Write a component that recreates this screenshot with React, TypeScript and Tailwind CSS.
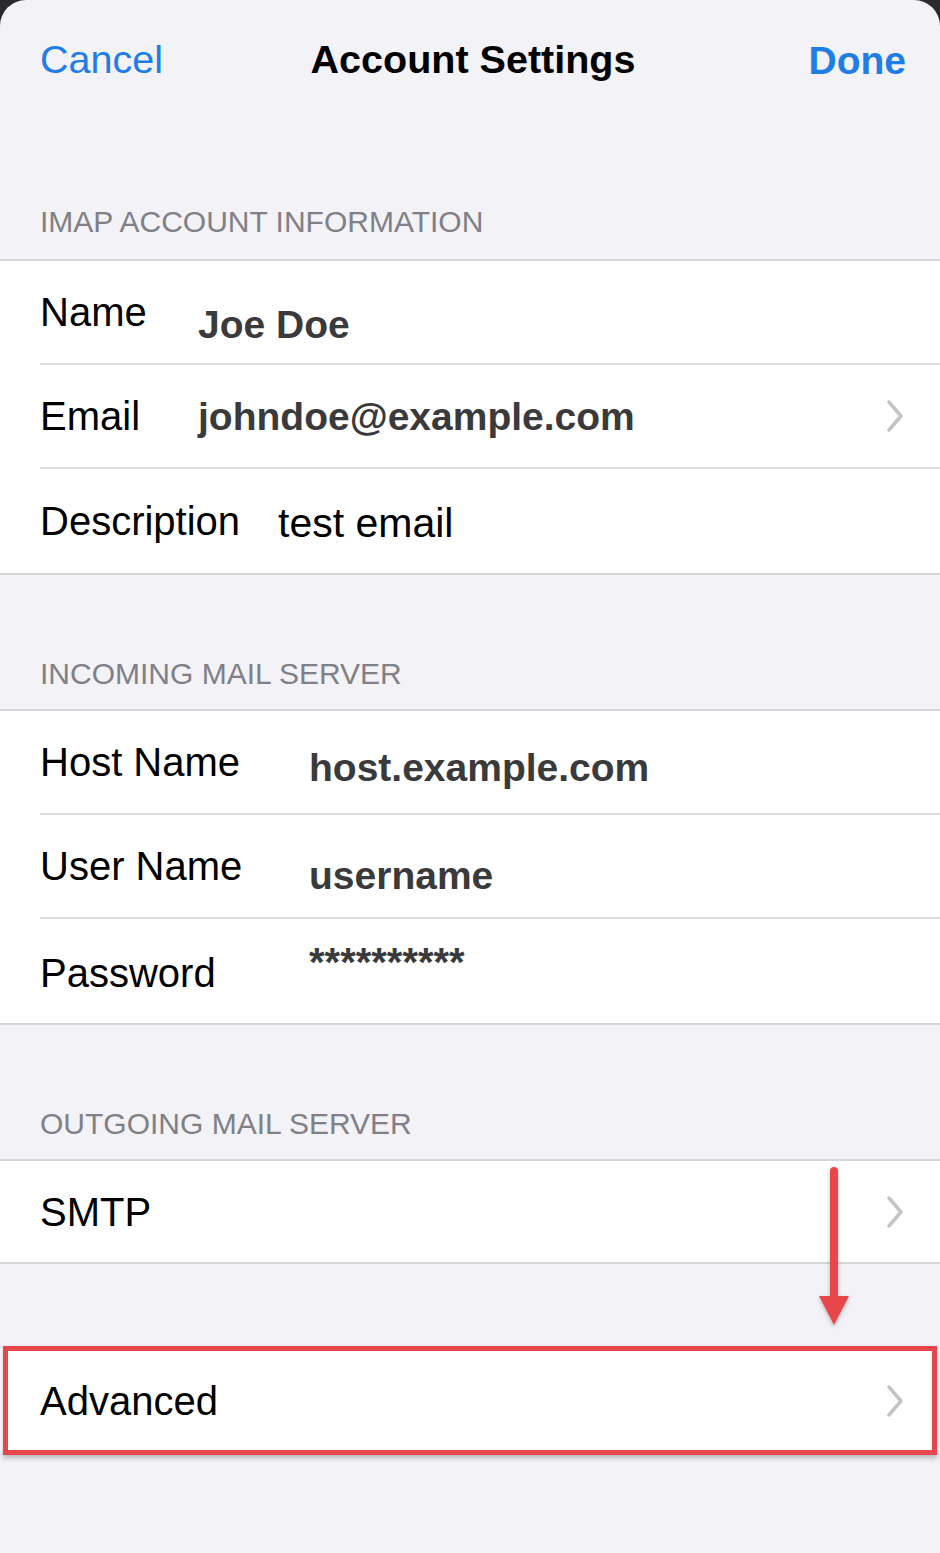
import type { ReactNode } from "react";

function Chevron() {
  return (
    <svg width="18" height="32" viewBox="0 0 18 32" className="ml-auto shrink-0">
      <polyline points="3,2 15,16 3,30" fill="none" stroke="#c4c4c8" strokeWidth="3.5" strokeLinecap="round" strokeLinejoin="round" />
    </svg>
  );
}

function Header({ title, h, pb }: { title: string; h: string; pb: string }) {
  return (
    <div className={`${h} ${pb} flex items-end px-10`}>
      <span className="text-[30px] leading-none text-[#808086]">{title}</span>
    </div>
  );
}

function Row({ label, labelW, labelCls = "", value, valueCls = "", chevron, last, h = "h-[104px]" }: {
  label: string; labelW: string; labelCls?: string; value?: ReactNode; valueCls?: string; chevron?: boolean; last?: boolean; h?: string;
}) {
  return (
    <div className="pl-10 bg-white">
      <div className={`${h} flex items-center pr-9 ${last ? "" : "border-b-2 border-[#dcdce0]"}`}>
        <span className={`${labelW} shrink-0 text-[40px] leading-none text-black ${labelCls}`}>{label}</span>
        {value && <span className={`leading-none ${valueCls}`}>{value}</span>}
        {chevron && <Chevron />}
      </div>
    </div>
  );
}

export default function App() {
  const bold = "text-[39px] font-bold text-[#3a3a3c]";
  return (
    <div className="bg-[#2a2a2c] font-['Liberation_Sans',Arial,sans-serif]">
      <div className="relative min-h-[1553px] bg-[#f2f2f7] rounded-t-[26px] overflow-hidden">
        {/* nav */}
        <div className="h-[120px] grid grid-cols-[1fr_auto_1fr] items-center pl-10 pr-[34px]">
          <span className="text-[39.5px] leading-none text-[#1f7de6]">Cancel</span>
          <span className="text-[39.5px] leading-none font-bold text-black">Account Settings</span>
          <span className="justify-self-end text-[39px] leading-none font-bold text-[#1f7de6]">Done</span>
        </div>

        <Header title="IMAP ACCOUNT INFORMATION" h="h-[139px]" pb="pb-[22px]" />
        <div className="border-y-2 border-[#d6d6da]">
          <Row label="Name" labelW="w-[158px]" value="Joe Doe" valueCls={`${bold} mt-[24px]`} />
          <Row label="Email" labelW="w-[158px]" value="johndoe@example.com" valueCls={bold} chevron />
          <Row label="Description" labelW="w-[238px]" value="test email" valueCls="text-[41px] text-black mt-[4px]" last />
        </div>

        <Header title="INCOMING MAIL SERVER" h="h-[134px]" pb="pb-[20px]" />
        <div className="border-y-2 border-[#d6d6da]">
          <Row label="Host Name" labelW="w-[269px]" value="host.example.com" valueCls={`${bold} mt-[10px]`} />
          <Row label="User Name" labelW="w-[269px]" value="username" valueCls={`${bold} mt-[18px]`} />
          <Row label="Password" labelW="w-[269px]" labelCls="mt-[4px]" value="**********" valueCls="text-[40px] font-bold text-[#3a3a3c] mb-[18px]" last />
        </div>

        <Header title="OUTGOING MAIL SERVER" h="h-[134px]" pb="pb-[20px]" />
        <div className="border-y-2 border-[#d6d6da]">
          <Row label="SMTP" labelW="w-auto" chevron last h="h-[101px]" />
        </div>

        <div className="h-[85px]" />
        <div className="relative">
          <Row label="Advanced" labelW="w-auto" chevron last h="h-[103px]" />
          <div className="absolute left-[3px] right-[3px] -top-[3px] -bottom-[3px] border-[5px] border-[#e8464b] shadow-[0_3px_5px_rgba(0,0,0,0.25)] pointer-events-none" />
        </div>

        {/* annotation arrow */}
        <svg width="40" height="166" viewBox="0 0 40 166" className="absolute left-[814px] top-[1165px] drop-shadow-[0_2px_2px_rgba(0,0,0,0.25)]">
          <line x1="20" y1="6" x2="20" y2="134" stroke="#e8464b" strokeWidth="8" strokeLinecap="round" />
          <polygon points="5,131 35,131 20,160" fill="#e8464b" />
        </svg>
      </div>
    </div>
  );
}
